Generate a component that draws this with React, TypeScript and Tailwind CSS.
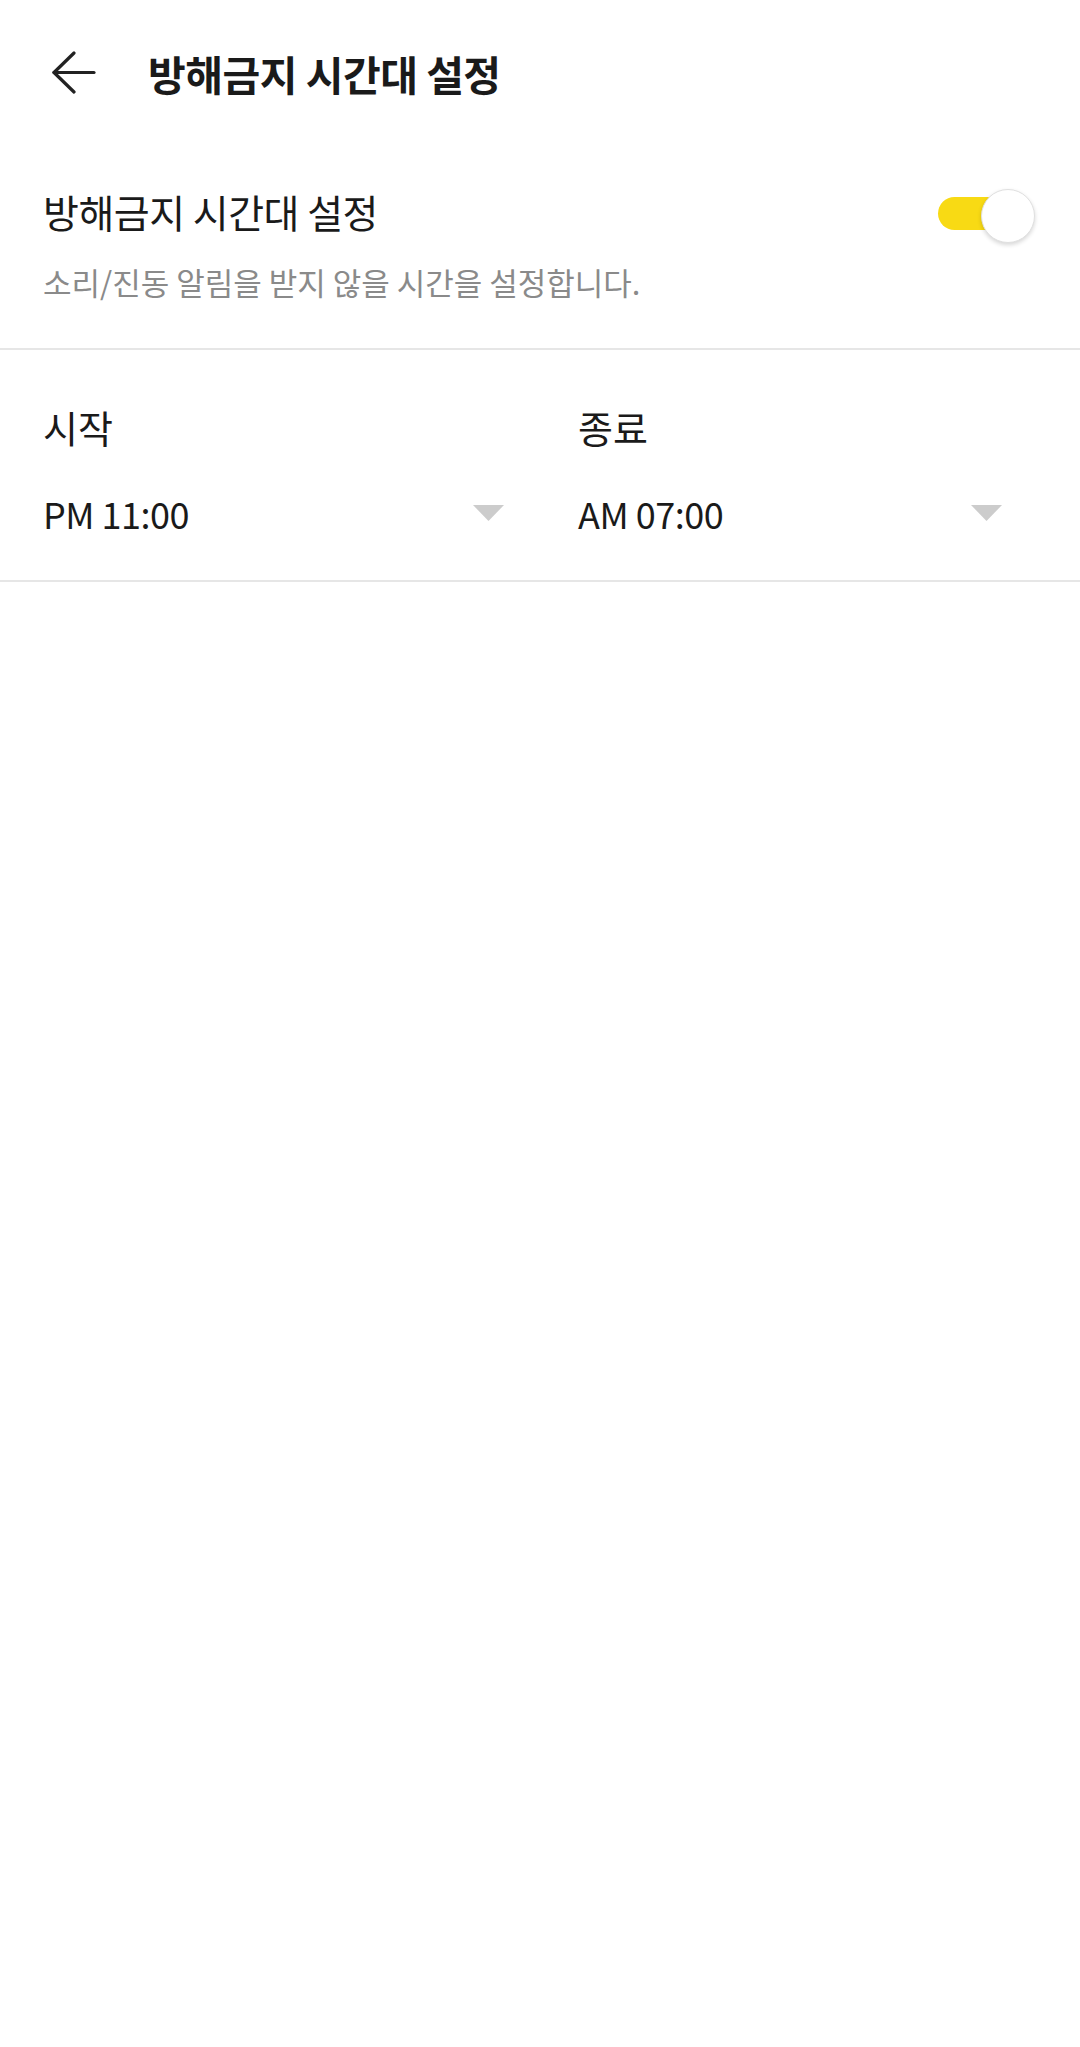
import React from "react";

const font = { fontFamily: '"Noto Sans CJK KR", "Noto Sans", sans-serif' };

function Caret() {
  return (
    <svg width="31" height="16" viewBox="0 0 31 16" className="shrink-0">
      <polygon points="0,0 31,0 15.5,16" fill="#cccccc" />
    </svg>
  );
}

export default function App() {
  return (
    <div className="w-[1080px] h-[2047px] bg-white text-[#1a1a1a]" style={font}>
      <header className="h-[150px] flex items-center pb-[4px]">
        <div className="w-[148px] pl-[52px] flex items-center">
          <svg width="44" height="44" viewBox="0 0 44 44" fill="none" stroke="#222" strokeWidth="3.2" strokeLinecap="round" strokeLinejoin="round">
            <path d="M2 21.5 H42" />
            <path d="M22 2 L2 21.5 L22 41" />
          </svg>
        </div>
        <h1 className="text-[41px] font-bold tracking-[-0.5px] leading-none">방해금지 시간대 설정</h1>
      </header>

      <section className="h-[200px] flex items-start pt-[36px] pl-[43px] pr-[45px] border-b-2 border-[#e6e6e6]">
        <div className="flex-1 flex flex-col">
          <div className="text-[39px] leading-[50px] tracking-[-0.5px]">방해금지 시간대 설정</div>
          <div className="text-[31px] leading-[40px] mt-[26px] text-[#8a8a8a]">소리/진동 알림을 받지 않을 시간을 설정합니다.</div>
        </div>
        <div className="relative w-[97px] h-[54px] mt-[3px]">
          <div className="absolute left-0 top-[8px] w-[84px] h-[33px] rounded-full bg-[#f8da14]" />
          <div className="absolute right-0 top-0 w-[54px] h-[54px] rounded-full bg-white border border-[#e0e0e0] shadow-[0_2px_4px_rgba(0,0,0,0.16)]" />
        </div>
      </section>

      <section className="h-[232px] flex pl-[43px] border-b-2 border-[#e6e6e6]">
        <div className="w-[461px] flex flex-col pt-[52px]">
          <div className="text-[38px] leading-[50px]">시작</div>
          <div className="flex items-center justify-between mt-[36px]">
            <span className="text-[36px] leading-[50px] tracking-[-0.5px]">PM 11:00</span>
            <Caret />
          </div>
        </div>
        <div className="w-[74px]" />
        <div className="w-[424px] flex flex-col pt-[52px]">
          <div className="text-[38px] leading-[50px]">종료</div>
          <div className="flex items-center justify-between mt-[36px]">
            <span className="text-[36px] leading-[50px] tracking-[-0.5px]">AM 07:00</span>
            <Caret />
          </div>
        </div>
      </section>
    </div>
  );
}
